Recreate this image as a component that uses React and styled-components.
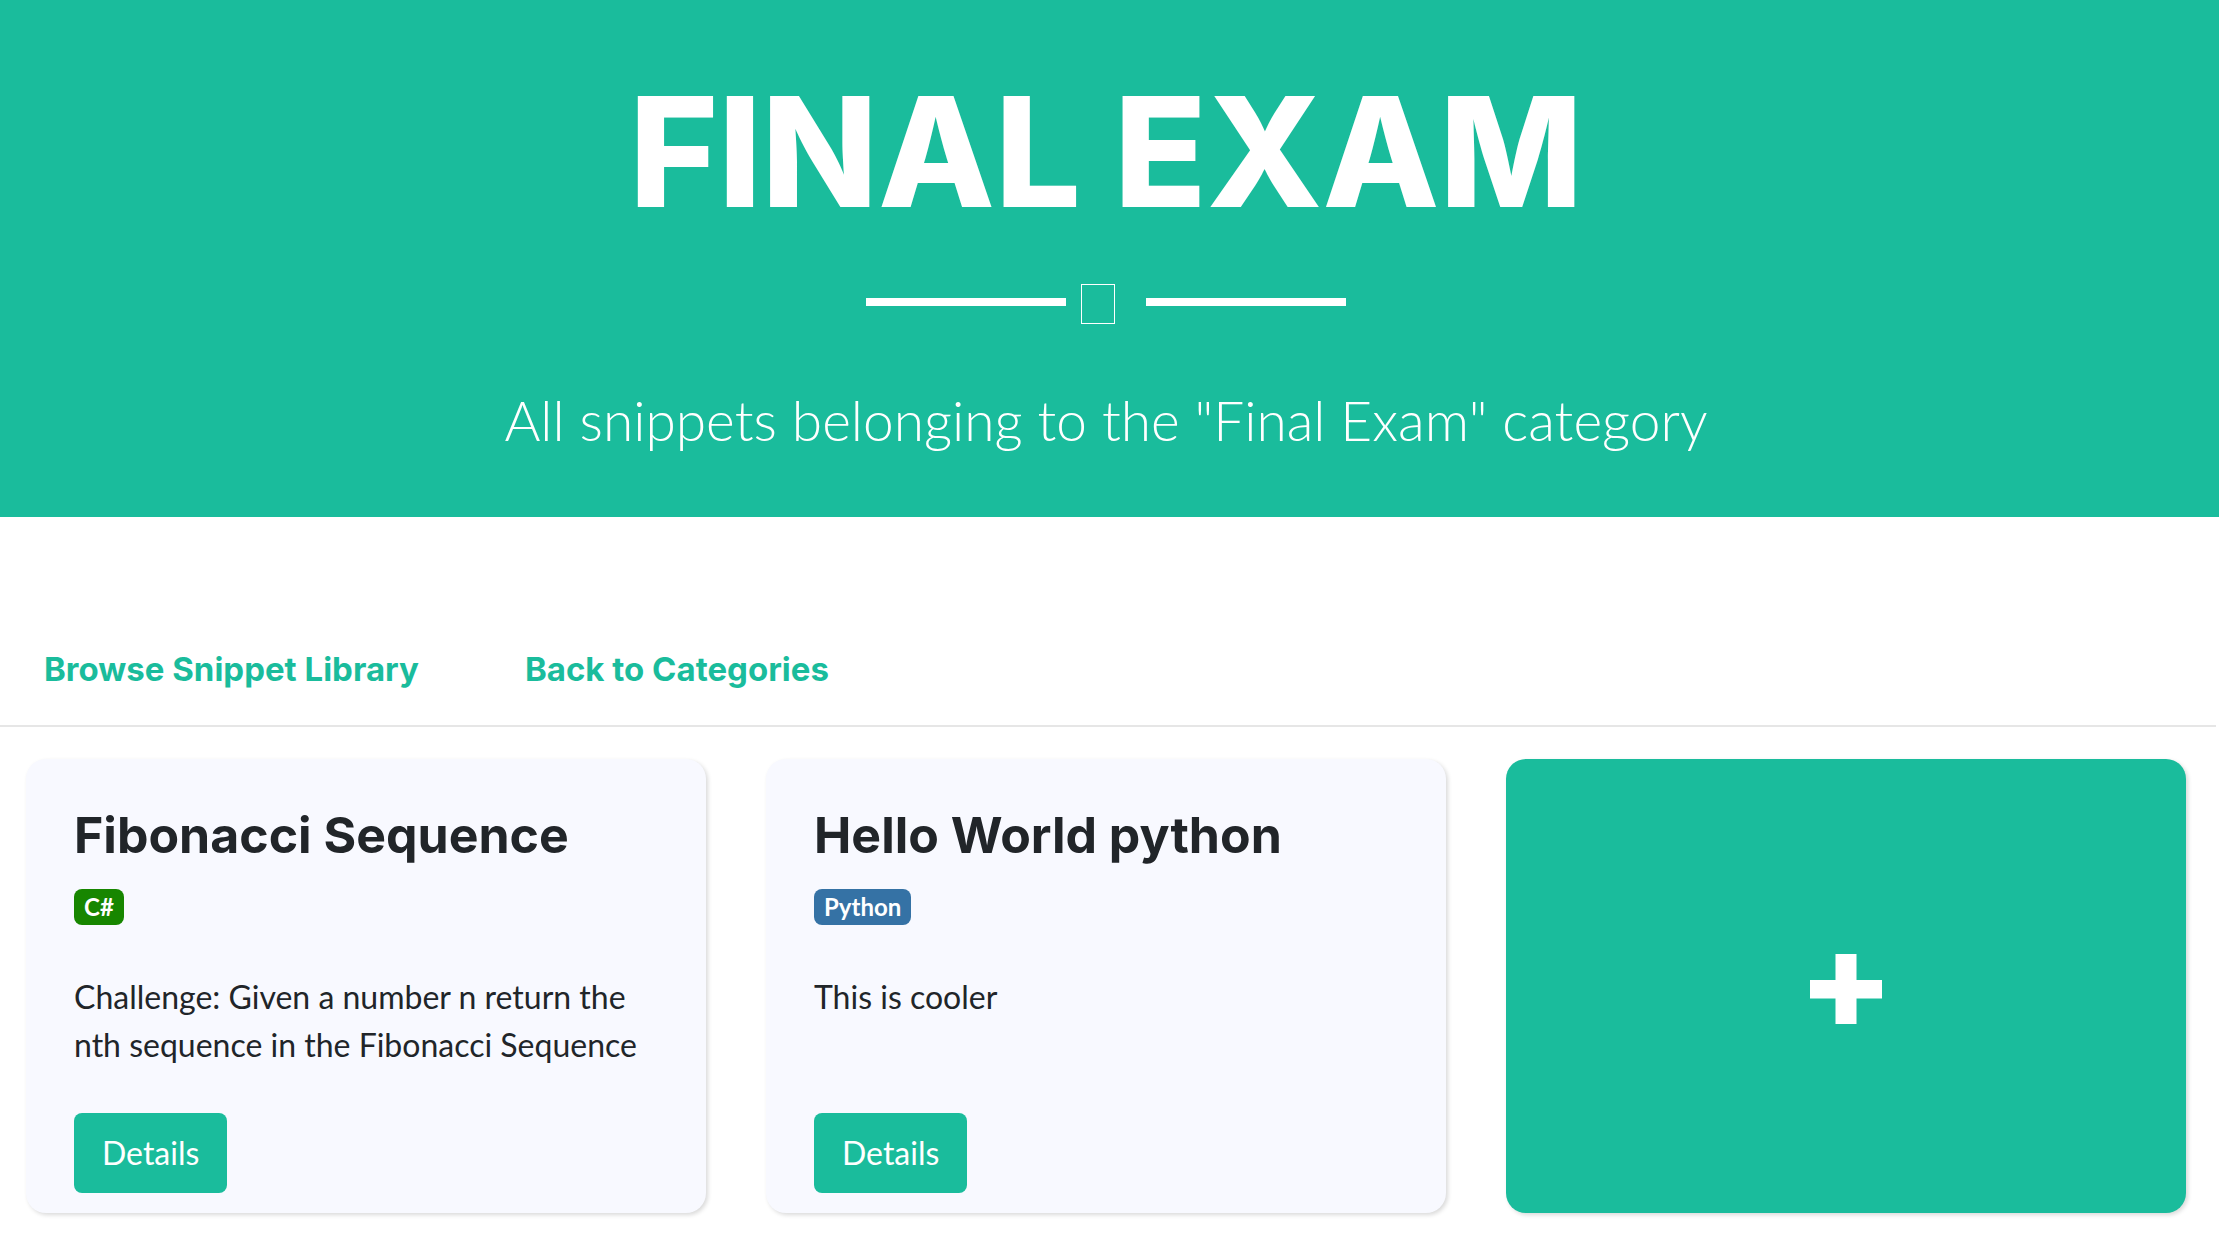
import React from "react";
import styled, { createGlobalStyle } from "styled-components";

const teal = "#1abc9c";
const heading = `Inter, "Open Sans", sans-serif`;
const cardShadow = "2px 2px 4px rgba(0, 0, 0, 0.15)";

const GlobalStyle = createGlobalStyle`
  *, *::before, *::after { box-sizing: border-box; }
  body {
    margin: 0;
    background: #fff;
    color: #212529;
    font: 400 32px/48px Lato, sans-serif;
  }
`;

const Masthead = styled.header`
  display: flex;
  flex-direction: column;
  align-items: center;
  padding: 64px 7px 57px 0;
  background: ${teal};
  color: #fff;
  text-align: center;
`;

const PageTitle = styled.h1`
  margin: 0;
  font: 800 152px/176px ${heading};
  text-transform: uppercase;
`;

const Divider = styled.div`
  display: flex;
  align-items: center;
  margin: 40px 0 56px;
`;

const DividerLine = styled.span`
  width: 200px;
  height: 8px;
  background: #fff;
`;

const DividerGlyph = styled.span`
  width: 34px;
  height: 40px;
  margin: 4px 31px 0 15px;
  border: 1px solid #fff;
`;

const Subtitle = styled.p`
  margin: 0;
  font-size: 55px;
  line-height: 80px;
  font-weight: 300;
`;

const Nav = styled.nav`
  display: flex;
  gap: 106px;
  margin-right: 3px;
  padding: 128px 44px 32px;
  border-bottom: 2px solid #e6e6e6;
`;

const NavLink = styled.a`
  color: ${teal};
  font: 700 33px/48px ${heading};
  text-decoration: none;
`;

const Grid = styled.main`
  display: grid;
  grid-template-columns: repeat(3, 1fr);
  gap: 60px;
  padding: 32px 33px 40px 26px;
`;

const Card = styled.article`
  display: flex;
  flex-direction: column;
  align-items: flex-start;
  padding: 48px 48px 20px;
  border-radius: 20px;
  background: #f8f9ff;
  box-shadow: ${cardShadow};
`;

const CardTitle = styled.h2`
  margin: 0 0 26px;
  font: 700 50px/56px ${heading};
`;

const Badge = styled.span`
  padding: 0 10px;
  border-radius: 8px;
  background: ${(p) => p.$color};
  color: #fff;
  font-size: 24px;
  line-height: 36px;
  font-weight: 700;
`;

const Description = styled.p`
  min-height: 96px;
  margin: 48px 0 44px;
`;

const DetailsButton = styled.button`
  padding: 16px 28px;
  border: 0;
  border-radius: 8px;
  background: ${teal};
  color: #fff;
  font: inherit;
`;

const AddCard = styled.a`
  display: flex;
  align-items: center;
  justify-content: center;
  padding-top: 6px;
  border-radius: 20px;
  background: ${teal};
  color: #fff;
  box-shadow: ${cardShadow};
`;

const snippets = [
  {
    title: "Fibonacci Sequence",
    language: "C#",
    color: "#178600",
    description:
      "Challenge: Given a number n return the nth sequence in the Fibonacci Sequence",
  },
  {
    title: "Hello World python",
    language: "Python",
    color: "#3572a5",
    description: "This is cooler",
  },
];

export default function App() {
  return (
    <>
      <GlobalStyle />
      <Masthead>
        <PageTitle>Final Exam</PageTitle>
        <Divider aria-hidden="true">
          <DividerLine />
          <DividerGlyph />
          <DividerLine />
        </Divider>
        <Subtitle>All snippets belonging to the "Final Exam" category</Subtitle>
      </Masthead>
      <Nav>
        <NavLink href="#library">Browse Snippet Library</NavLink>
        <NavLink href="#categories">Back to Categories</NavLink>
      </Nav>
      <Grid>
        {snippets.map((s) => (
          <Card key={s.title}>
            <CardTitle>{s.title}</CardTitle>
            <Badge $color={s.color}>{s.language}</Badge>
            <Description>{s.description}</Description>
            <DetailsButton type="button">Details</DetailsButton>
          </Card>
        ))}
        <AddCard href="#new" aria-label="Add snippet">
          <svg width="72" height="70" viewBox="0 0 72 70" fill="currentColor">
            <path d="M25.5 0h21v26H72v18.500H46.500V70h-21V44.500H0V26h25.500z" />
          </svg>
        </AddCard>
      </Grid>
    </>
  );
}
